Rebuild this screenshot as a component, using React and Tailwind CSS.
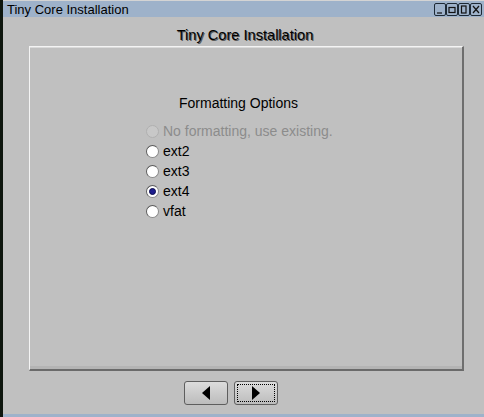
import React, { useState } from 'react';

const options = [
    { id: 'none', label: 'No formatting, use existing.', disabled: true },
    { id: 'ext2', label: 'ext2' },
    { id: 'ext3', label: 'ext3' },
    { id: 'ext4', label: 'ext4' },
    { id: 'vfat', label: 'vfat' },
];

const WinButton = ({ children }) => (
    <div className="w-[12px] h-[13px] rounded-[2px] border border-[#1e2a36] flex items-center justify-center">
        <svg width="8" height="9" viewBox="0 0 8 9" fill="none" stroke="#111" strokeWidth="1.2">
            {children}
        </svg>
    </div>
);

const Radio = ({ checked, disabled }) => (
    <div
        className={`w-[13px] h-[13px] rounded-full border flex items-center justify-center shrink-0 ${disabled
                ? 'bg-[#c8c8c8] border-[#b0b0b0]'
                : 'bg-white border-t-[#5a5a5a] border-l-[#5a5a5a] border-r-[#8a8a8a] border-b-[#8a8a8a]'
            }`}
    >
        {checked && <div className="w-[7px] h-[7px] rounded-full bg-[#1d1d8e] border border-[#0c0c50]" />}
    </div>
);

const App = () => {
    const [selected, setSelected] = useState('ext4');

    return (
        <div className="w-[484px] h-[417px] flex bg-[#c0c0c0] text-black font-['Liberation_Sans',Arial,sans-serif] overflow-hidden">
            {/* left frame */}
            <div className="w-[3px] h-full bg-[#0e160e] shrink-0" />

            <div className="flex-1 flex flex-col">
                {/* Title bar */}
                <div className="border-t border-[#d4d4d4] h-[17px] bg-[#9eb2ca] flex items-center justify-between pl-[4px] pr-[2px]">
                    <span className="text-[13px] leading-none">Tiny Core Installation</span>
                    <div className="flex">
                        <WinButton><path d="M1 8h5" /></WinButton>
                        <WinButton><rect x="1" y="2.5" width="6" height="5" /></WinButton>
                        <WinButton><rect x="1.5" y="1" width="4.5" height="7" /></WinButton>
                        <WinButton><path d="M1 1l6 7M7 1l-6 7" /></WinButton>
                    </div>
                </div>

                {/* Heading */}
                <div className="pt-[10px] h-[27px] text-center text-[14.6px] leading-[17px] [text-shadow:1px_1px_0_#5a5a5a] pl-[3px]">
                    Tiny Core Installation
                </div>

                {/* Panel */}
                <div className="mt-[2px] ml-[26px] w-[435px] h-[325px] border-t border-l border-[#f4f4f4] border-r-2 border-r-[#6e6e6e] border-b-2 border-b-[#6a6a6a] shadow-[inset_0_1px_0_#dadada,inset_0_-3px_0_#b4b4b4] pt-[48px] pl-[116px]">
                    <div className="w-[185px] text-center text-[14px] leading-[17px]">Formatting Options</div>
                    <div className="mt-[9px] flex flex-col">
                        {options.map(opt => (
                            <label
                                key={opt.id}
                                onClick={() => !opt.disabled && setSelected(opt.id)}
                                className={`h-[20px] flex items-center gap-[4px] text-[14px] ${opt.disabled ? 'text-[#8c8c8c]' : 'text-black'}`}
                            >
                                <Radio checked={selected === opt.id} disabled={opt.disabled} />
                                <span>{opt.label}</span>
                            </label>
                        ))}
                    </div>
                </div>

                {/* Nav buttons */}
                <div className="mt-[10px] ml-[181px] flex gap-[6px]">
                    <button className="w-[44px] h-[24px] rounded-[3px] border border-[#5e5e5e] bg-gradient-to-b from-[#dcdcdc] to-[#bcbcbc] flex items-center justify-center">
                        <svg width="8" height="14" viewBox="0 0 8 14"><path d="M8 0v14L0 7z" fill="#000" /></svg>
                    </button>
                    <button className="w-[44px] h-[24px] rounded-[3px] border border-[#5e5e5e] bg-gradient-to-b from-[#dcdcdc] to-[#bcbcbc] p-[2px]">
                        <div className="w-full h-full border border-dotted border-black flex items-center justify-center">
                            <svg width="8" height="14" viewBox="0 0 8 14"><path d="M0 0v14L8 7z" fill="#000" /></svg>
                        </div>
                    </button>
                </div>

                <div className="mt-auto h-[3px] bg-[#9eb2ca]" />
            </div>
        </div>
    );
};

export default App;
